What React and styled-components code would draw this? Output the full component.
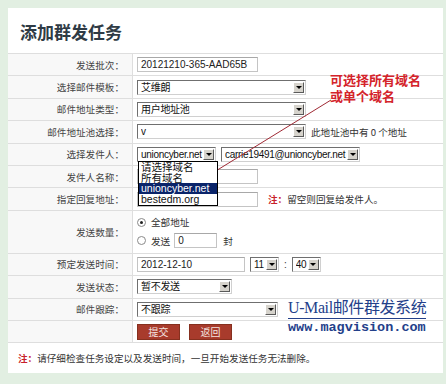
import React from "react";
import styled, { createGlobalStyle } from "styled-components";

const GlobalStyle = createGlobalStyle`
  html, body {
    margin: 0;
    padding: 0;
    background: #e2efe2;
  }
  body {
    font-family: "Liberation Sans", "Noto Sans CJK SC", sans-serif;
    font-size: 10px;
    color: #333;
  }
`;

const Page = styled.div`
  width: 446px;
  height: 384px;
  box-sizing: border-box;
  padding: 8px 3px 11px 8px;
`;

const Panel = styled.div`
  position: relative;
  height: 100%;
  background: #fff;
  display: flex;
  flex-direction: column;
`;

const Title = styled.h1`
  margin: 0;
  height: 45px;
  box-sizing: border-box;
  padding: 12px 0 0 12px;
  font-family: "Noto Sans CJK SC", sans-serif;
  font-size: 17px;
  font-weight: 700;
  line-height: 24px;
  color: #2f3b45;
`;

const Table = styled.div`
  border-top: 1px solid #dedede;
`;

const Row = styled.div`
  display: grid;
  grid-template-columns: 125px 1fr;
  height: ${({ $tall }) => ($tall ? "43px" : "22.4px")};
  box-sizing: border-box;
  border-bottom: 1px solid #dedede;
`;

const Label = styled.div`
  background: #f8f8f8;
  border-right: 1px solid #dedede;
  display: flex;
  align-items: center;
  justify-content: flex-end;
  padding-right: 8px;
  font-family: "Noto Sans CJK SC", sans-serif;
  font-size: 9.6px;
  color: #444;
`;

const Cell = styled.div`
  display: flex;
  flex-direction: ${({ $column }) => ($column ? "column" : "row")};
  align-items: ${({ $column }) => ($column ? "flex-start" : "center")};
  justify-content: ${({ $column }) => ($column ? "center" : "flex-start")};
  gap: ${({ $column }) => ($column ? "4px" : "5px")};
  padding-left: 4px;
  font-family: "Liberation Sans", "Noto Sans CJK SC", sans-serif;
  font-size: 10px;
  color: #333;
  white-space: nowrap;
`;

const Input = styled.div`
  width: ${({ $w }) => $w}px;
  height: 15px;
  box-sizing: border-box;
  border: 1px solid #c4c4c4;
  border-top-color: #a8a8a8;
  background: #fff;
  padding-left: 3px;
  font-family: "Liberation Sans", "Noto Sans CJK SC", sans-serif;
  font-size: 10px;
  line-height: 13px;
  color: #222;
  overflow: hidden;
`;

const SelectBox = styled.div`
  width: ${({ $w }) => $w}px;
  height: 15px;
  box-sizing: border-box;
  display: flex;
  align-items: center;
  border: 1px solid #d0d0d0;
  border-top-color: #6f6f6f;
  border-left-color: #6f6f6f;
  background: #fff;
  padding-left: 3px;
  font-family: "Liberation Sans", "Noto Sans CJK SC", sans-serif;
  font-size: 10px;
  letter-spacing: -0.3px;
  color: #111;
`;

const SelectText = styled.span`
  flex: 1;
  overflow: hidden;
  line-height: 13px;
`;

const Arrow = styled.span`
  flex: none;
  width: 11px;
  height: 11px;
  margin-right: 1px;
  box-sizing: border-box;
  background: #d6d3cc;
  border: 1px solid;
  border-color: #fff #5a5a5a #5a5a5a #fff;
  display: flex;
  align-items: center;
  justify-content: center;

  &::after {
    content: "";
    border-left: 3px solid transparent;
    border-right: 3px solid transparent;
    border-top: 3px solid #000;
  }
`;

const Select = ({ w, children }) => (
  <SelectBox $w={w}>
    <SelectText>{children}</SelectText>
    <Arrow />
  </SelectBox>
);

const Hint = styled.span`
  font-family: "Noto Sans CJK SC", sans-serif;
  font-size: 9.6px;
  color: #333;
`;

const Red = styled.span`
  color: #c8202a;
  font-weight: 700;
`;

const RadioLine = styled.div`
  display: flex;
  align-items: center;
  gap: 4px;
  font-family: "Noto Sans CJK SC", sans-serif;
  font-size: 9.6px;
`;

const Radio = styled.span`
  width: 9px;
  height: 9px;
  box-sizing: border-box;
  border-radius: 50%;
  border: 1px solid #8a8a8a;
  display: inline-flex;
  align-items: center;
  justify-content: center;
  margin-right: 1px;

  &::after {
    content: "";
    width: 3px;
    height: 3px;
    border-radius: 50%;
    background: ${({ $on }) => ($on ? "#222" : "transparent")};
  }
`;

const Button = styled.div`
  width: 43px;
  height: 16px;
  box-sizing: border-box;
  background: #a83b2c;
  border: 1px solid #86301f;
  color: #f4e4e0;
  font-family: "Noto Sans CJK SC", sans-serif;
  font-size: 10px;
  line-height: 14px;
  text-align: center;
  margin-right: 4px;
`;

const Note = styled.div`
  flex: 1;
  display: flex;
  align-items: center;
  padding-left: 10px;
  font-family: "Noto Sans CJK SC", sans-serif;
  font-size: 9.6px;
  color: #333;
`;

const Callout = styled.div`
  position: absolute;
  left: 322px;
  top: 64px;
  font-family: "Noto Sans CJK SC", sans-serif;
  font-size: 13px;
  font-weight: 700;
  line-height: 16px;
  color: #d4232b;
`;

const Pointer = styled.svg`
  position: absolute;
  left: 0;
  top: 0;
  width: 100%;
  height: 100%;
  pointer-events: none;
`;

const DropList = styled.div`
  position: absolute;
  left: 130px;
  top: 153px;
  width: 80px;
  box-sizing: border-box;
  border: 1px solid #000;
  background: #fff;
`;

const DropItem = styled.div`
  height: 10.7px;
  line-height: 10.7px;
  padding-left: 2px;
  font-family: "Liberation Sans", "Noto Sans CJK SC", sans-serif;
  font-size: 10.5px;
  background: ${({ $active }) => ($active ? "#0a246a" : "transparent")};
  color: ${({ $active }) => ($active ? "#fff" : "#111")};
  white-space: nowrap;
`;

const Watermark = styled.div`
  position: absolute;
  left: 280px;
  top: 291px;
  width: 138px;
  color: #23408a;
`;

const MarkTitle = styled.div`
  font-family: "Liberation Serif", "Noto Sans CJK SC", serif;
  font-size: 16px;
  line-height: 18px;
  letter-spacing: -0.4px;
  border-bottom: 1px solid #23408a;
  padding-bottom: 1px;
  white-space: nowrap;
`;

const MarkUrl = styled.div`
  font-family: "Liberation Mono", monospace;
  font-size: 13.5px;
  font-weight: 700;
  line-height: 16px;
  padding-top: 1px;
  white-space: nowrap;
`;

const rows = [
  { label: "发送批次：", content: <Input $w={121}>20121210-365-AAD65B</Input> },
  { label: "选择邮件模板：", content: <Select w={169}>艾维朗</Select> },
  { label: "邮件地址类型：", content: <Select w={169}>用户地址池</Select> },
  {
    label: "邮件地址池选择：",
    content: (
      <>
        <Select w={169}>v</Select>
        <Hint>此地址池中有 0 个地址</Hint>
      </>
    ),
  },
  {
    label: "选择发件人：",
    content: (
      <>
        <Select w={79}>unioncyber.net</Select>
        <Select w={139}>carrie19491@unioncyber.net</Select>
      </>
    ),
  },
  { label: "发件人名称：", content: <Input $w={121} /> },
  {
    label: "指定回复地址：",
    content: (
      <>
        <Input $w={121} />
        <Hint style={{ marginLeft: 5 }}>
          <Red>注：</Red>留空则回复给发件人。
        </Hint>
      </>
    ),
  },
];

const rows2 = [
  {
    label: "预定发送时间：",
    content: (
      <>
        <Input $w={108}>2012-12-10</Input>
        <Select w={29}>11</Select>
        <span>:</span>
        <Select w={29}>40</Select>
      </>
    ),
  },
  { label: "发送状态：", content: <Select w={95}>暂不发送</Select> },
  { label: "邮件跟踪：", content: <Select w={141}>不跟踪</Select> },
  {
    label: "",
    content: (
      <>
        <Button>提交</Button>
        <Button>返回</Button>
      </>
    ),
  },
];

const App = () => {
  return (
    <Page>
      <GlobalStyle />
      <Panel>
        <Title>添加群发任务</Title>
        <Table>
          {rows.map((r, i) => (
            <Row key={i}>
              <Label>{r.label}</Label>
              <Cell>{r.content}</Cell>
            </Row>
          ))}
          <Row $tall>
            <Label>发送数量：</Label>
            <Cell $column>
              <RadioLine>
                <Radio $on />
                全部地址
              </RadioLine>
              <RadioLine>
                <Radio />
                发送
                <Input $w={43}>0</Input>
                <span style={{ marginLeft: 2 }}>封</span>
              </RadioLine>
            </Cell>
          </Row>
          {rows2.map((r, i) => (
            <Row key={i}>
              <Label>{r.label}</Label>
              <Cell>{r.content}</Cell>
            </Row>
          ))}
        </Table>
        <Note>
          <Red>注：</Red>请仔细检查任务设定以及发送时间，一旦开始发送任务无法删除。
        </Note>

        <Pointer>
          <line x1="323" y1="92" x2="198" y2="169" stroke="#a02a35" strokeWidth="1" />
        </Pointer>
        <Callout>
          可选择所有域名
          <br />
          或单个域名
        </Callout>
        <DropList>
          <DropItem>请选择域名</DropItem>
          <DropItem>所有域名</DropItem>
          <DropItem $active>unioncyber.net</DropItem>
          <DropItem>bestedm.org</DropItem>
        </DropList>
        <Watermark>
          <MarkTitle>U-Mail邮件群发系统</MarkTitle>
          <MarkUrl>www.magvision.com</MarkUrl>
        </Watermark>
      </Panel>
    </Page>
  );
};

export default App;
